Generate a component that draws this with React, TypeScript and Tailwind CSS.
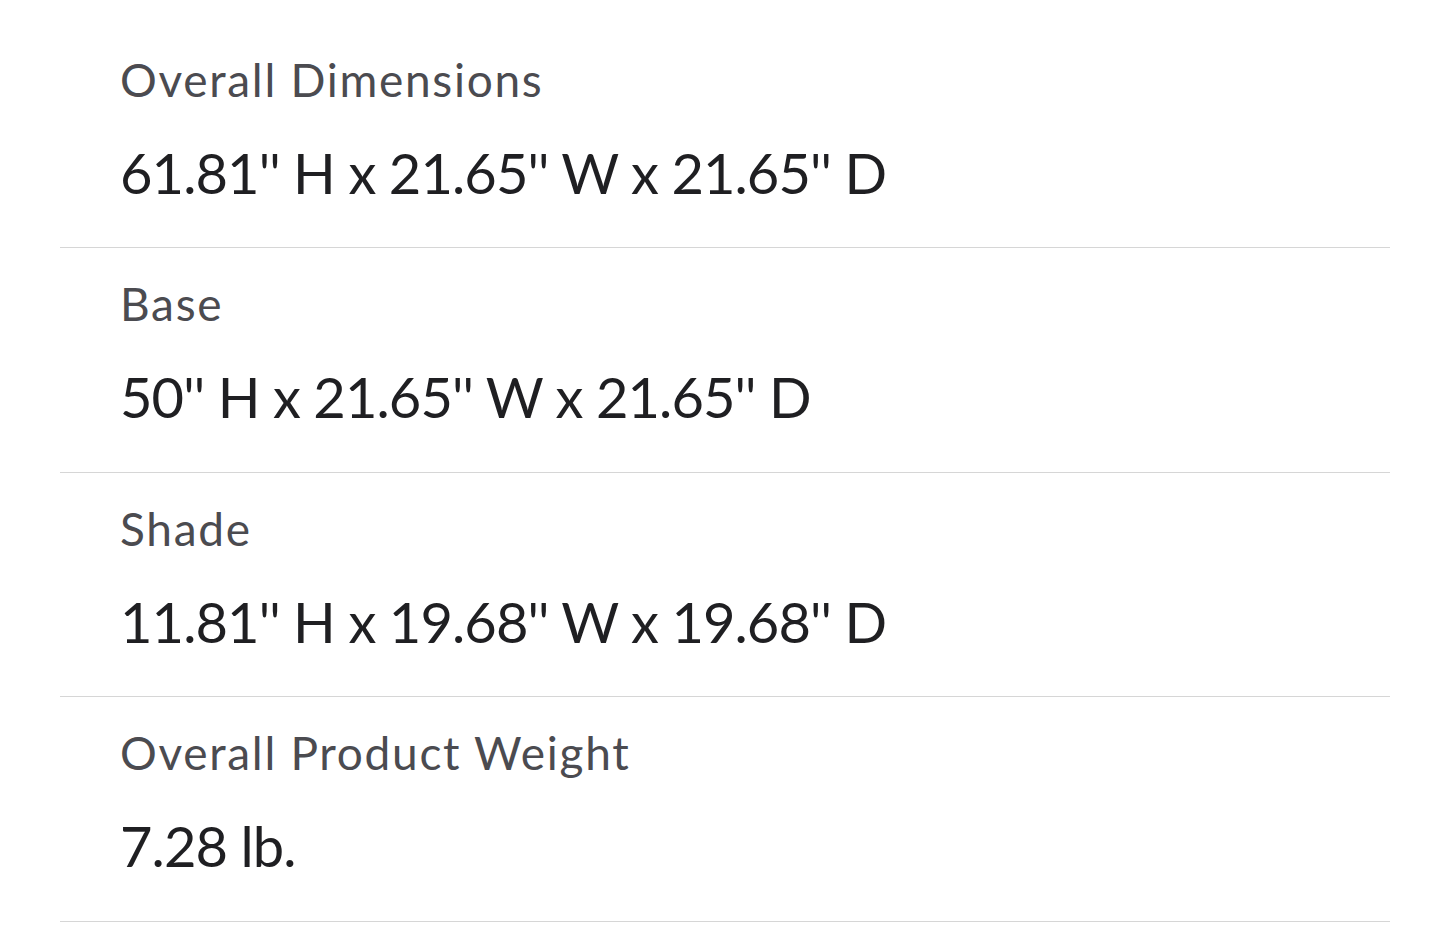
const specs = [
  { label: "Overall Dimensions", value: "61.81'' H x 21.65'' W x 21.65'' D" },
  { label: "Base", value: "50'' H x 21.65'' W x 21.65'' D" },
  { label: "Shade", value: "11.81'' H x 19.68'' W x 19.68'' D" },
  { label: "Overall Product Weight", value: "7.28 lb." },
];

export default function App() {
  return (
    <div className="min-h-screen bg-white pt-[24px] pl-[60px] pr-[50px] font-['Lato',sans-serif]">
      {specs.map((s) => (
        <div
          key={s.label}
          className="h-[224.4px] border-b border-[#d6d6d6] pl-[60px] pt-[33px] flex flex-col"
        >
          <span className="text-[46px] leading-[46px] tracking-[1.7px] text-[#4b4b50]">
            {s.label}
          </span>
          <span className="mt-[42px] text-[56px] leading-[56px] tracking-[-0.9px] text-[#1f1f22]">
            {s.value}
          </span>
        </div>
      ))}
    </div>
  );
}
